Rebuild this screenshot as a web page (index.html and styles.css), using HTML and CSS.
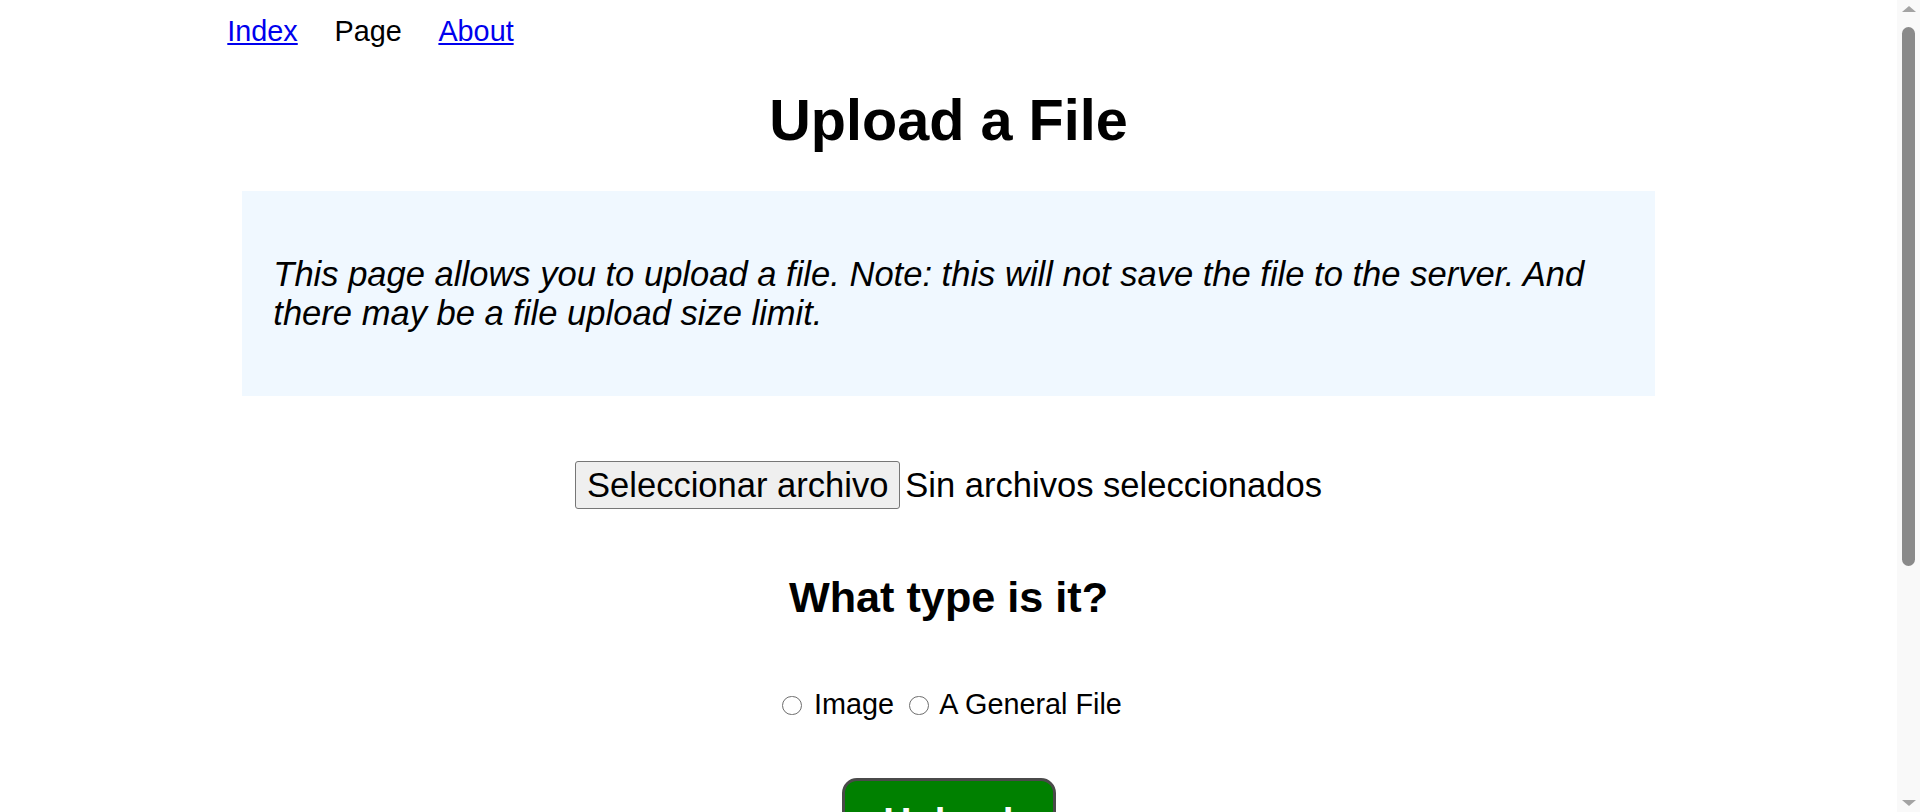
FILE: index.html
```html
<!DOCTYPE html>
<html lang="en">
<head>
<meta charset="utf-8">
<title>Upload a File</title>
<link rel="stylesheet" href="styles.css">
</head>
<body>
<div class="frame">
  <div class="page">
    <nav class="topnav">
      <a class="nav-link" href="#">Index</a>
      <span class="nav-current">Page</span>
      <a class="nav-link" href="#">About</a>
    </nav>
    <main class="content">
      <h1 class="title">Upload a File</h1>
      <div class="note">
        <p class="note-text">This page allows you to upload a file. Note: this will not save the file to the server. And there may be a file upload size limit.</p>
      </div>
      <form class="upload-form">
        <div class="file-row"><button type="button" class="file-btn">Seleccionar archivo</button><span class="file-status">Sin archivos seleccionados</span></div>
        <h2 class="subtitle">What type is it?</h2>
        <div class="radio-row"><label class="radio-label"><input class="radio" type="radio" name="kind"> Image</label> <label class="radio-label"><input class="radio" type="radio" name="kind"> A General File</label></div>
        <div class="submit-row"><button type="button" class="upload-btn">Upload</button></div>
      </form>
    </main>
  </div>
  <div class="scrollbar" aria-hidden="true">
    <span class="sb-arrow sb-up"></span>
    <span class="sb-thumb"></span>
    <span class="sb-arrow sb-down"></span>
  </div>
</div>
</body>
</html>
```

FILE: styles.css
```css
html {
  background: #ffffff;
}

body {
  margin: 0;
  font-family: "Liberation Sans", Arial, sans-serif;
  font-size: 28.8px;
  color: #000000;
}

.frame {
  display: flex;
  align-items: flex-start;
}

.page {
  flex: 1;
  min-width: 0;
  min-height: 1172px;
}

/* fake browser scrollbar column */
.scrollbar {
  flex: 0 0 23px;
  width: 23px;
  height: 812px;
  background: #f9f9f9;
  display: flex;
  flex-direction: column;
  align-items: center;
  position: sticky;
  top: 0;
}

.sb-arrow {
  width: 0;
  height: 0;
  border-left: 7px solid transparent;
  border-right: 7px solid transparent;
}

.sb-up {
  margin-top: 6px;
  border-bottom: 6px solid #a3a3a3;
}

.sb-thumb {
  width: 13px;
  height: 539px;
  margin-top: 15px;
  border-radius: 7px;
  background: #8a8a8a;
}

.sb-down {
  margin-top: auto;
  margin-bottom: 6px;
  border-top: 6px solid #a3a3a3;
}

.topnav {
  display: flex;
  gap: 36.7px;
  padding: 15px 0 0 227.3px;
}

.nav-link {
  color: #0000ee;
  text-decoration: underline;
}

.nav-current {
  color: #000000;
}

.content {
  text-align: center;
}

.title {
  font-size: 57.6px;
  font-weight: bold;
  margin: 38.6px 0;
}

.note {
  width: 1413px;
  box-sizing: border-box;
  margin: 0 auto;
  padding: 28.8px 28.8px 28.8px 31.3px;
  background: #f0f8ff;
  text-align: left;
}

.note-text {
  margin: 34.56px 0;
  font-size: 34.56px;
  font-style: italic;
}

.upload-form {
  margin: 0;
}

.file-row {
  margin: 65px 0 0;
  font-size: 34.56px;
  line-height: 48px;
}

.file-btn {
  font-family: inherit;
  font-size: 34.56px;
  color: #000000;
  background: #efefef;
  border: 1px solid #767676;
  border-radius: 3px;
  height: 48px;
  padding: 0 11px;
  margin: 0 4.8px 0 0;
  vertical-align: top;
  line-height: 44px;
}

.file-status {
  vertical-align: top;
}

.subtitle {
  font-size: 43.2px;
  font-weight: bold;
  margin: 64.5px 0 0;
}

.radio-row {
  margin-top: 66px;
}

.radio {
  appearance: none;
  -webkit-appearance: none;
  box-sizing: border-box;
  width: 19.4px;
  height: 19.4px;
  margin: 0 4.3px 0 7.2px;
  border: 1.5px solid #6e6e6e;
  border-radius: 50%;
  background: #ffffff;
  vertical-align: -1px;
}

.submit-row {
  margin-top: 56.5px;
}

.upload-btn {
  width: 214px;
  box-sizing: border-box;
  padding: 19px 0;
  font-family: inherit;
  font-size: 38.4px;
  font-weight: bold;
  color: #ffffff;
  background: #008000;
  border: 3px solid #4a4a4a;
  border-radius: 15px;
}
```
